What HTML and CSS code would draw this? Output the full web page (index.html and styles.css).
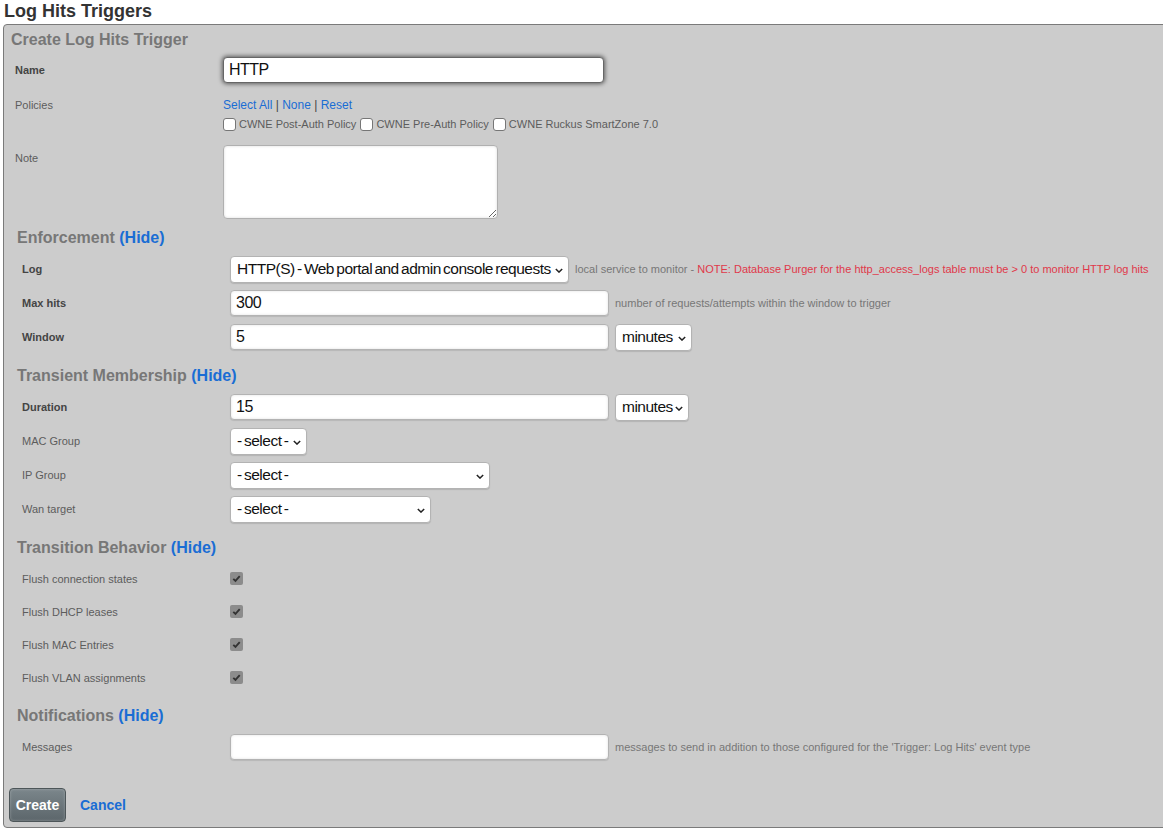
FILE: index.html
```html
<!DOCTYPE html>
<html>
<head>
  <meta charset="UTF-8" />
  <link rel="stylesheet" href="styles.css">
</head>
<body>
  <h1 class="page-title">Log Hits Triggers</h1>

  <div class="panel">
    <h2 class="panel-title">Create Log Hits Trigger</h2>

    <div class="group">
      <div class="row">
        <div class="label strong">Name</div>
        <div class="field"><input class="text focused name-input" type="text" value="HTTP"></div>
      </div>

      <div class="row row-top policies">
        <div class="label">Policies</div>
        <div class="field">
          <div class="links"><a href="#">Select All</a> | <a href="#">None</a> | <a href="#">Reset</a></div>
          <div class="policy-list">
            <label class="policy"><span class="box"></span>CWNE Post-Auth Policy</label>
            <label class="policy"><span class="box"></span>CWNE Pre-Auth Policy</label>
            <label class="policy"><span class="box"></span>CWNE Ruckus SmartZone 7.0</label>
          </div>
        </div>
      </div>

      <div class="row row-top note-row">
        <div class="label">Note</div>
        <div class="field"><textarea class="note"></textarea></div>
      </div>
    </div>

    <h3 class="section-title first">Enforcement <a href="#">(Hide)</a></h3>
    <div class="section">
      <div class="row">
        <div class="label strong">Log</div>
        <div class="field">
          <span class="select w-log">HTTP(S) - Web portal and admin console requests<svg viewBox="0 0 10 6"><path d="M1 1l4 4 4-4"/></svg></span>
          <span class="hint">local service to monitor - <span class="warn">NOTE: Database Purger for the http_access_logs table must be &gt; 0 to monitor HTTP log hits</span></span>
        </div>
      </div>
      <div class="row">
        <div class="label strong">Max hits</div>
        <div class="field">
          <input class="text w-wide" type="text" value="300">
          <span class="hint">number of requests/attempts within the window to trigger</span>
        </div>
      </div>
      <div class="row">
        <div class="label strong">Window</div>
        <div class="field">
          <input class="text w-wide" type="text" value="5">
          <span class="select w-unit">minutes<svg viewBox="0 0 10 6"><path d="M1 1l4 4 4-4"/></svg></span>
        </div>
      </div>
    </div>

    <h3 class="section-title">Transient Membership <a href="#">(Hide)</a></h3>
    <div class="section">
      <div class="row">
        <div class="label strong">Duration</div>
        <div class="field">
          <input class="text w-wide" type="text" value="15">
          <span class="select w-unit2">minutes<svg viewBox="0 0 10 6"><path d="M1 1l4 4 4-4"/></svg></span>
        </div>
      </div>
      <div class="row">
        <div class="label">MAC Group</div>
        <div class="field"><span class="select w-mac">- select -<svg viewBox="0 0 10 6"><path d="M1 1l4 4 4-4"/></svg></span></div>
      </div>
      <div class="row">
        <div class="label">IP Group</div>
        <div class="field"><span class="select w-ip">- select -<svg viewBox="0 0 10 6"><path d="M1 1l4 4 4-4"/></svg></span></div>
      </div>
      <div class="row">
        <div class="label">Wan target</div>
        <div class="field"><span class="select w-wan">- select -<svg viewBox="0 0 10 6"><path d="M1 1l4 4 4-4"/></svg></span></div>
      </div>
    </div>

    <h3 class="section-title">Transition Behavior <a href="#">(Hide)</a></h3>
    <div class="section">
      <div class="row row-flag">
        <div class="label">Flush connection states</div>
        <div class="field"><span class="flag"><svg viewBox="0 0 12 12"><path d="M2.5 6.3l2.4 2.4 4.6-5.2"/></svg></span></div>
      </div>
      <div class="row row-flag">
        <div class="label">Flush DHCP leases</div>
        <div class="field"><span class="flag"><svg viewBox="0 0 12 12"><path d="M2.5 6.3l2.4 2.4 4.6-5.2"/></svg></span></div>
      </div>
      <div class="row row-flag">
        <div class="label">Flush MAC Entries</div>
        <div class="field"><span class="flag"><svg viewBox="0 0 12 12"><path d="M2.5 6.3l2.4 2.4 4.6-5.2"/></svg></span></div>
      </div>
      <div class="row row-flag">
        <div class="label">Flush VLAN assignments</div>
        <div class="field"><span class="flag"><svg viewBox="0 0 12 12"><path d="M2.5 6.3l2.4 2.4 4.6-5.2"/></svg></span></div>
      </div>
    </div>

    <h3 class="section-title">Notifications <a href="#">(Hide)</a></h3>
    <div class="section">
      <div class="row">
        <div class="label">Messages</div>
        <div class="field">
          <input class="text w-wide" type="text" value="">
          <span class="hint">messages to send in addition to those configured for the 'Trigger: Log Hits' event type</span>
        </div>
      </div>
    </div>

    <div class="actions">
      <button class="create-btn">Create</button>
      <a href="#" class="cancel">Cancel</a>
    </div>
  </div>
</body>
</html>
```

FILE: styles.css
```css
* { box-sizing: border-box; }
body {
  margin: 0;
  font-family: "Liberation Sans", Arial, sans-serif;
  background: #ffffff;
  color: #555;
  overflow: hidden;
}
a {
  color: #1a6dd4;
  text-decoration: none;
}
.page-title {
  font-size: 18px;
  line-height: 22px;
  font-weight: bold;
  color: #333;
  margin: 0 0 2px 4px;
}
.panel {
  background: #cccccc;
  border: 1px solid #7a7a7a;
  border-radius: 4px 0 0 4px;
  margin: 0 -6px 0 3px;
  padding: 5px 0 4px 0;
  height: 804px;
}
.panel-title {
  font-size: 16px;
  line-height: 20px;
  font-weight: bold;
  color: #777;
  margin: 0 0 3px 7px;
}
.group { padding-left: 11px; }
.section { padding-left: 18px; margin-top: 4px; }
.section-title {
  font-size: 16px;
  line-height: 20px;
  font-weight: bold;
  color: #777;
  margin: 12px 0 0 13px;
}
.section-title.first { margin-top: 9px; }
.section-title a { color: #1a6dd4; }
.row {
  display: flex;
  align-items: center;
  height: 34px;
}
.row-flag { height: 33px; }
.row-top {
  align-items: flex-start;
  height: auto;
}
.label {
  width: 208px;
  flex: none;
  font-size: 11px;
  line-height: 16px;
  color: #5c5c5c;
}
.label.strong {
  font-weight: bold;
  color: #444;
}
.field {
  display: flex;
  align-items: center;
  gap: 6px;
}
.policies { padding-top: 10px; }
.policies .field { display: block; }
.links {
  font-size: 12px;
  line-height: 16px;
  color: #444;
}
.policy-list {
  display: flex;
  margin-top: 2px;
  gap: 4px;
}
.policy {
  display: flex;
  align-items: center;
  font-size: 11px;
  line-height: 18px;
  color: #5c5c5c;
}
.box {
  width: 13px;
  height: 13px;
  background: #fff;
  border: 1px solid #767676;
  border-radius: 3px;
  margin-right: 3px;
}
.note-row { padding-top: 12px; }
.note-row .label { padding-top: 5px; }
.note {
  width: 275px;
  height: 74px;
  border: 1px solid #b0b0b0;
  border-radius: 4px;
  background: #fff;
  box-shadow: inset 0 0 3px rgba(0, 0, 0, 0.15);
  resize: vertical;
  display: block;
}
.text {
  height: 26px;
  border: 1px solid #b3b3b3;
  border-radius: 4px;
  background: #fff;
  box-shadow: inset 0 0 3px rgba(0, 0, 0, 0.12), 0 1px 1px rgba(0, 0, 0, 0.1);
  font-family: "Liberation Sans", Arial, sans-serif;
  font-size: 16px;
  color: #111;
  padding: 0 5px;
  outline: none;
  letter-spacing: -0.5px;
}
.text.focused {
  border-color: #666;
  box-shadow: 0 0 4px 1px rgba(0, 0, 0, 0.55);
}
.name-input { width: 381px; }
.w-wide { width: 379px; }
.select {
  position: relative;
  display: inline-flex;
  align-items: center;
  height: 27px;
  padding: 0 18px 0 6px;
  background: #fff;
  border: 1px solid #b3b3b3;
  border-radius: 4px;
  box-shadow: 0 1px 1px rgba(0, 0, 0, 0.12);
  font-size: 15.5px;
  color: #111;
  letter-spacing: -0.5px;
  word-spacing: -1.5px;
  white-space: nowrap;
  overflow: hidden;
}
.select svg {
  position: absolute;
  right: 5px;
  top: 11px;
  width: 8px;
  height: 5px;
  fill: none;
  stroke: #222;
  stroke-width: 1.8;
}
.w-log { width: 339px; }
.w-unit { width: 77px; }
.w-unit2 { width: 74px; }
.w-mac { width: 77px; }
.w-ip { width: 260px; }
.w-wan { width: 201px; }
.hint {
  font-size: 11px;
  color: #777;
  white-space: nowrap;
}
.warn { color: #e0384a; }
.flag {
  width: 13px;
  height: 13px;
  background: #8c8c8c;
  border-radius: 2px;
  display: flex;
  align-items: center;
  justify-content: center;
}
.flag svg {
  width: 11px;
  height: 11px;
  fill: none;
  stroke: #333;
  stroke-width: 2;
}
.actions {
  display: flex;
  align-items: center;
  gap: 14px;
  margin: 24px 0 0 5px;
}
.create-btn {
  width: 57px;
  height: 34px;
  background: linear-gradient(#7b868b, #5c666b);
  border: 1px solid #4d5659;
  border-radius: 4px;
  box-shadow: inset 0 0 3px rgba(255, 255, 255, 0.3);
  color: #fff;
  font-family: "Liberation Sans", Arial, sans-serif;
  font-size: 14px;
  font-weight: bold;
  padding: 0;
}
.cancel {
  font-size: 14px;
  font-weight: bold;
}
```
